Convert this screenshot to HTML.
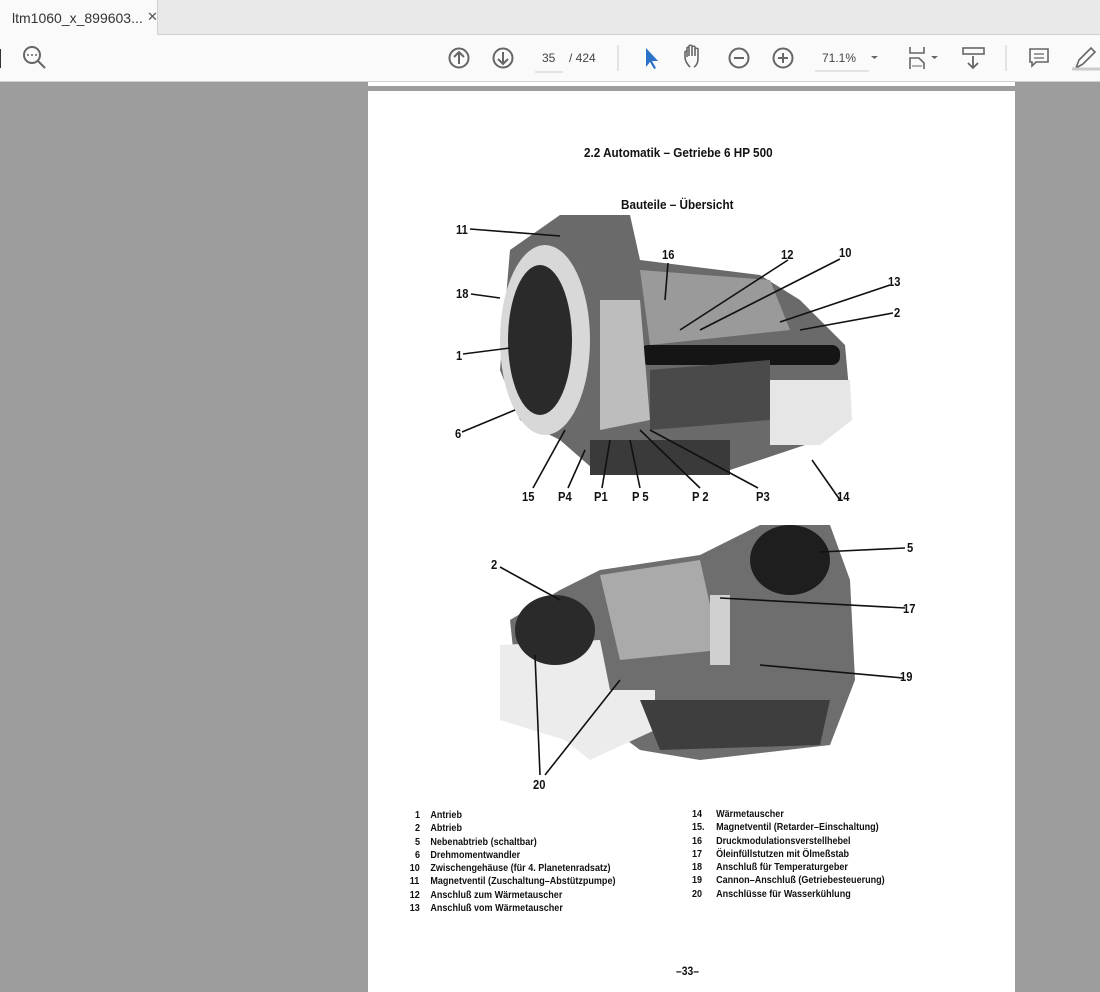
<!DOCTYPE html>
<html><head><meta charset="utf-8"><style>
*{margin:0;padding:0;box-sizing:border-box}
body{width:1100px;height:992px;overflow:hidden;background:#9d9d9d;font-family:"Liberation Sans",sans-serif;position:relative}
#tabbar{position:absolute;left:0;top:0;width:1100px;height:35px;background:#e9e9e9;border-bottom:1px solid #cfcfcf}
#tab{position:absolute;left:0;top:0;width:158px;height:36px;background:#fafafa;border-right:1px solid #cfcfcf;font-size:14px;color:#333;padding:10px 0 0 12px}
#tab span{position:absolute;left:147px;top:9px;font-size:13px;color:#555}
#tool{position:absolute;left:0;top:35px;width:1100px;height:47px;background:#fafafa;border-bottom:1px solid #d0d0d0}
.pg{position:absolute;background:#fff}
.t{position:absolute;font-family:"Liberation Sans",sans-serif;font-weight:bold;color:#111;white-space:nowrap;transform:scaleX(.86);transform-origin:0 0}
.leg{font-size:10.5px;line-height:13.3px}
</style></head><body>
<div id="tabbar"><div id="tab">ltm1060_x_899603...<span>✕</span></div></div>
<div id="tool">
<svg width="1100" height="47" style="position:absolute;left:0;top:0" fill="none" stroke="#666" stroke-width="2">
<line x1="0" y1="14" x2="0" y2="33" stroke="#333"/>
<circle cx="32" cy="20" r="8"/><line x1="38" y1="26" x2="45" y2="33"/>
<circle cx="28" cy="20" r="1" fill="#666" stroke="none"/><circle cx="32" cy="20" r="1" fill="#666" stroke="none"/><circle cx="36" cy="20" r="1" fill="#666" stroke="none"/>
<circle cx="459" cy="23" r="9.5"/><path d="M459 29V17M454 22l5-5 5 5"/>
<circle cx="503" cy="23" r="9.5"/><path d="M503 17v12M498 24l5 5 5-5"/>
<line x1="535" y1="37" x2="563" y2="37" stroke="#ccc" stroke-width="1"/>
<line x1="618" y1="10" x2="618" y2="36" stroke="#ccc" stroke-width="1"/>
<path d="M646 13v19l4-5 4 7 2-1-4-7h6z" fill="#2a72c8" stroke="none"/>
<path d="M690 32c-3-3-5-7-5-10v-5c0-1 2-1 2 0v5M687 22V13c0-1 2-1 2 0v8M689 14v-3c0-1 3-1 3 0v10M692 12c0-1 3-1 3 0v9M695 14c0-1 3-1 3 0v10c0 4-2 7-4 8" stroke-width="1.6"/>
<circle cx="739" cy="23" r="9.5"/><path d="M734 23h10"/>
<circle cx="783" cy="23" r="9.5"/><path d="M778 23h10M783 18v10"/>
<line x1="815" y1="36" x2="869" y2="36" stroke="#ccc" stroke-width="1"/>
<path d="M871 21h7l-3.5 3z" fill="#666" stroke="none"/>
<path d="M910 12v6h14v-6M910 34v-11h9l5 5v6" stroke-width="1.6"/><path d="M912 31h10" stroke-width="1"/>
<path d="M931 21h7l-3.5 3z" fill="#666" stroke="none"/>
<rect x="963" y="13" width="21" height="6" stroke-width="1.6"/><path d="M973 21v12M968 28l5 5 5-5" stroke-width="1.8"/>
<line x1="1006" y1="10" x2="1006" y2="36" stroke="#ccc" stroke-width="1"/>
<path d="M1030 14h18v13h-12l-4 4v-4h-2z" stroke-width="1.6"/><path d="M1034 19h10M1034 23h10" stroke-width="1.2"/>
<path d="M1076 33l3-8 12-12 4 4-12 12z" stroke-width="1.6"/><path d="M1072 34h28" stroke="#ccc" stroke-width="3"/>
</svg>
<div style="position:absolute;left:542px;top:16px;font-size:12px;color:#444">35</div>
<div style="position:absolute;left:569px;top:16px;font-size:12px;color:#444">/ 424</div>
<div style="position:absolute;left:822px;top:16px;font-size:12px;color:#444">71.1%</div>
</div>
<div class="pg" style="left:368px;top:82px;width:647px;height:4px"></div>
<div class="pg" style="left:368px;top:91px;width:647px;height:901px"></div>

<svg width="1100" height="992" style="position:absolute;left:0;top:0">
<g>
<path d="M510 250 L560 215 L630 215 L640 260 L760 275 L800 300 L845 345 L850 400 L820 440 L730 470 L600 475 L560 440 L520 420 L500 370 Z" fill="#6a6a6a"/>
<ellipse cx="545" cy="340" rx="45" ry="95" fill="#d8d8d8"/>
<ellipse cx="540" cy="340" rx="32" ry="75" fill="#2a2a2a"/>
<path d="M640 270 L770 280 L790 330 L650 345 Z" fill="#9a9a9a"/>
<rect x="640" y="345" width="200" height="20" rx="8" fill="#151515"/>
<path d="M770 380 L850 380 L852 420 L820 445 L770 445 Z" fill="#e6e6e6"/>
<rect x="590" y="440" width="140" height="35" fill="#3a3a3a"/>
<path d="M600 300 L640 300 L650 420 L600 430 Z" fill="#bdbdbd"/>
<path d="M650 370 L770 360 L770 420 L650 430Z" fill="#4a4a4a"/>
<path d="M510 620 L560 590 L600 570 L700 555 L760 525 L830 525 L850 580 L855 680 L830 745 L700 760 L640 750 L600 720 L520 715 Z" fill="#6e6e6e"/>
<path d="M600 575 L700 560 L720 650 L620 660 Z" fill="#aaaaaa"/>
<ellipse cx="790" cy="560" rx="40" ry="35" fill="#1e1e1e"/>
<path d="M500 645 L600 640 L610 690 L655 690 L655 730 L590 760 L565 740 L500 720 Z" fill="#ececec"/>
<ellipse cx="555" cy="630" rx="40" ry="35" fill="#2a2a2a"/>
<path d="M640 700 L830 700 L820 745 L660 750Z" fill="#3e3e3e"/>
<rect x="710" y="595" width="20" height="70" fill="#d0d0d0"/>
</g>
<g stroke="#111" stroke-width="1.6" fill="none">
<path d="M470 229L560 236M471 294L500 298M463 354L510 348M462 432L515 410M668 263L665 300M788 260L680 330M840 259L700 330M890 285L780 322M893 313L800 330M812 460L840 500M533 488L565 430M568 488L585 450M602 488L610 440M640 488L630 440M700 488L640 430M758 488L650 430M500 567L560 600M905 548L820 552M905 608L720 598M903 678L760 665M540 775L535 655M545 775L620 680"/>
</g>
</svg>

<div class="t" style="left:584px;top:145px;font-size:13px;transform:scaleX(.9)">2.2 Automatik – Getriebe 6 HP 500</div>
<div class="t" style="left:621px;top:197px;font-size:13px;transform:scaleX(.9)">Bauteile – Übersicht</div>
<div class="t" style="left:456px;top:222px;font-size:13px">11</div>
<div class="t" style="left:456px;top:286px;font-size:13px">18</div>
<div class="t" style="left:456px;top:348px;font-size:13px">1</div>
<div class="t" style="left:455px;top:426px;font-size:13px">6</div>
<div class="t" style="left:662px;top:247px;font-size:13px">16</div>
<div class="t" style="left:781px;top:247px;font-size:13px">12</div>
<div class="t" style="left:839px;top:245px;font-size:13px">10</div>
<div class="t" style="left:888px;top:274px;font-size:13px">13</div>
<div class="t" style="left:894px;top:305px;font-size:13px">2</div>
<div class="t" style="left:837px;top:489px;font-size:13px">14</div>
<div class="t" style="left:522px;top:489px;font-size:13px">15</div>
<div class="t" style="left:558px;top:489px;font-size:13px">P4</div>
<div class="t" style="left:594px;top:489px;font-size:13px">P1</div>
<div class="t" style="left:632px;top:489px;font-size:13px">P 5</div>
<div class="t" style="left:692px;top:489px;font-size:13px">P 2</div>
<div class="t" style="left:756px;top:489px;font-size:13px">P3</div>
<div class="t" style="left:491px;top:557px;font-size:13px">2</div>
<div class="t" style="left:907px;top:540px;font-size:13px">5</div>
<div class="t" style="left:903px;top:601px;font-size:13px">17</div>
<div class="t" style="left:900px;top:669px;font-size:13px">19</div>
<div class="t" style="left:533px;top:777px;font-size:13px">20</div>

<div class="t leg" style="left:408px;top:809px">
<div style="display:flex"><div style="width:26px;text-align:right;padding-right:12px">1</div>Antrieb</div>
<div style="display:flex"><div style="width:26px;text-align:right;padding-right:12px">2</div>Abtrieb</div>
<div style="display:flex"><div style="width:26px;text-align:right;padding-right:12px">5</div>Nebenabtrieb (schaltbar)</div>
<div style="display:flex"><div style="width:26px;text-align:right;padding-right:12px">6</div>Drehmomentwandler</div>
<div style="display:flex"><div style="width:26px;padding-left:2px">10</div>Zwischengehäuse (für 4. Planetenradsatz)</div>
<div style="display:flex"><div style="width:26px;padding-left:2px">11</div>Magnetventil (Zuschaltung–Abstützpumpe)</div>
<div style="display:flex"><div style="width:26px;padding-left:2px">12</div>Anschluß zum Wärmetauscher</div>
<div style="display:flex"><div style="width:26px;padding-left:2px">13</div>Anschluß vom Wärmetauscher</div>
</div>
<div class="t leg" style="left:692px;top:808px">
<div style="display:flex"><div style="width:28px">14</div>Wärmetauscher</div>
<div style="display:flex"><div style="width:28px">15.</div>Magnetventil (Retarder–Einschaltung)</div>
<div style="display:flex"><div style="width:28px">16</div>Druckmodulationsverstellhebel</div>
<div style="display:flex"><div style="width:28px">17</div>Öleinfüllstutzen mit Ölmeßstab</div>
<div style="display:flex"><div style="width:28px">18</div>Anschluß für Temperaturgeber</div>
<div style="display:flex"><div style="width:28px">19</div>Cannon–Anschluß (Getriebesteuerung)</div>
<div style="display:flex"><div style="width:28px">20</div>Anschlüsse für Wasserkühlung</div>
</div>
<div class="t" style="left:676px;top:964px;font-size:12px">–33–</div>
</body></html>
